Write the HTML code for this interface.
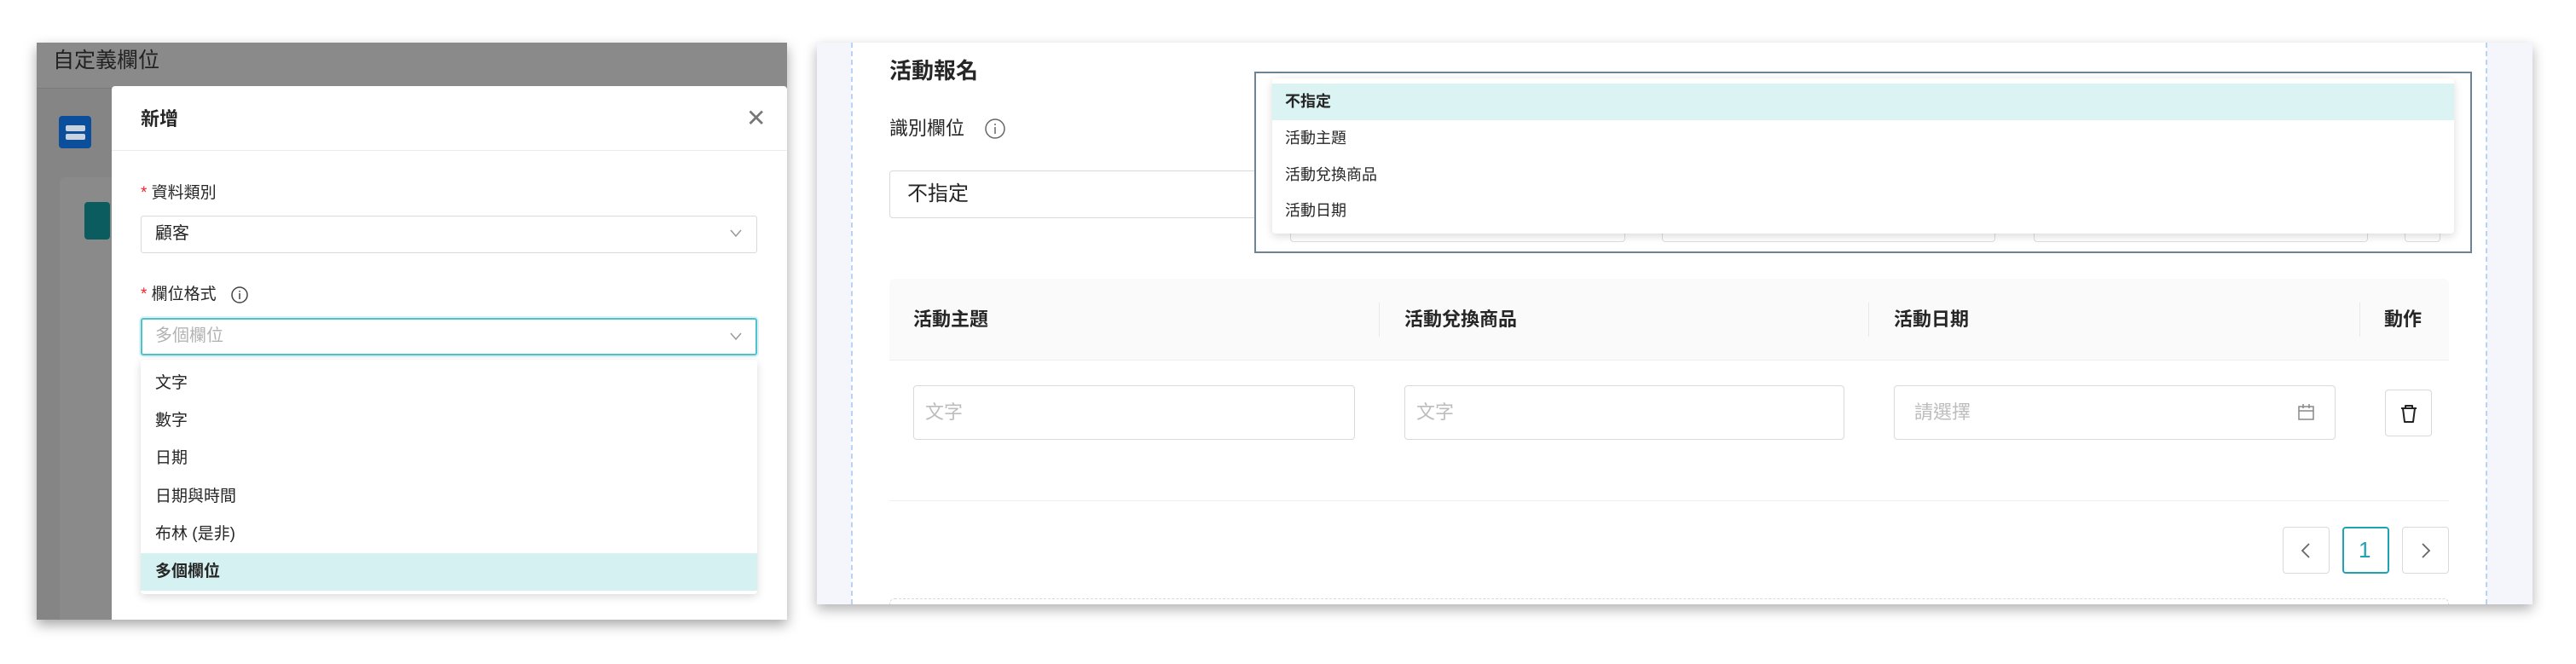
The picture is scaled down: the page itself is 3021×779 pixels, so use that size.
<!DOCTYPE html>
<html><head><meta charset="utf-8"><style>
*{box-sizing:border-box;margin:0;padding:0}
body{width:3021px;height:779px;background:#fff;position:relative;overflow:hidden;font-family:"Liberation Sans","Noto Sans CJK TC",sans-serif;color:#262626}
.a{position:absolute}
.t{position:absolute;white-space:nowrap;line-height:1}
</style></head><body>
<!-- LEFT PANEL -->
<div class="a" style="left:43px;top:50px;width:880px;height:677px;background:#8a8a8a;box-shadow:0 6px 14px rgba(0,0,0,.35);overflow:hidden">
  <div class="a" style="left:0;top:53px;width:880px;height:1px;background:#7a7a7a"></div>
  <div class="t" style="left:19px;top:9px;font-size:25px;color:#222">自定義欄位</div>
  <div class="a" style="left:0;top:54px;width:880px;height:623px;background:#858585"></div>
  <div class="a" style="left:26px;top:86px;width:38px;height:38px;background:#0b4f9c;border-radius:4px"></div>
  <div class="a" style="left:34px;top:97px;width:23px;height:7px;background:#c9d3e0;border-radius:2px"></div>
  <div class="a" style="left:34px;top:107px;width:23px;height:7px;background:#c9d3e0;border-radius:2px"></div>
  <div class="a" style="left:27px;top:158px;width:70px;height:520px;background:#8a8a8a;border-radius:6px 0 0 0"></div>
  <div class="a" style="left:56px;top:187px;width:30px;height:44px;background:#0a5c5f;border-radius:4px"></div>
  <!-- modal -->
  <div class="a" style="left:88px;top:51px;width:792px;height:626px;background:#fff;border-radius:4px 4px 0 0">
    <div class="t" style="left:34px;top:28px;font-size:22px;font-weight:bold">新增</div>
    <div class="t" style="left:744px;top:24px;font-size:28px;color:#777;font-weight:300">✕</div>
    <div class="a" style="left:0;top:75px;width:792px;height:1px;background:#ececec"></div>
    <div class="t" style="left:34px;top:116px;font-size:19px"><span style="color:#f5222d">*</span> 資料類別</div>
    <div class="a" style="left:34px;top:152px;width:723px;height:44px;border:1px solid #d9d9d9;border-radius:3px"></div>
    <div class="t" style="left:51px;top:163px;font-size:20px">顧客</div>
    <svg class="a" style="left:725px;top:168px" width="14" height="10"><path d="M1 1 L7 8 L13 1" fill="none" stroke="#999" stroke-width="1.5"/></svg>
    <div class="t" style="left:34px;top:235px;font-size:19px"><span style="color:#f5222d">*</span> 欄位格式</div>
    <svg class="a" style="left:139px;top:234px" width="22" height="22"><circle cx="11" cy="11" r="9" fill="none" stroke="#444" stroke-width="1.5"/><path d="M11 9v7M11 6v1.5" stroke="#444" stroke-width="1.5"/></svg>
    <div class="a" style="left:34px;top:272px;width:723px;height:44px;border:2px solid #4fc3cc;border-radius:3px;box-shadow:0 0 0 2px rgba(79,195,204,.2)"></div>
    <div class="t" style="left:51px;top:283px;font-size:20px;color:#b3b3b3">多個欄位</div>
    <svg class="a" style="left:725px;top:289px" width="14" height="10"><path d="M1 1 L7 8 L13 1" fill="none" stroke="#999" stroke-width="1.5"/></svg>
    <div class="a" style="left:34px;top:321px;width:723px;height:275px;background:#fff;border-radius:4px;box-shadow:0 3px 10px rgba(0,0,0,.15)">
      <div class="t" style="left:17px;top:18px;font-size:19px">文字</div>
      <div class="t" style="left:17px;top:62px;font-size:19px">數字</div>
      <div class="t" style="left:17px;top:106px;font-size:19px">日期</div>
      <div class="t" style="left:17px;top:151px;font-size:19px">日期與時間</div>
      <div class="t" style="left:17px;top:195px;font-size:19px">布林 (是非)</div>
      <div class="a" style="left:0;top:227px;width:723px;height:44px;background:#d5f1f1"></div>
      <div class="t" style="left:17px;top:239px;font-size:19px;font-weight:bold">多個欄位</div>
    </div>
  </div>
</div>
<!-- RIGHT PANEL -->
<div class="a" style="left:958px;top:50px;width:2012px;height:659px;background:#fff;box-shadow:0 6px 14px rgba(0,0,0,.3);overflow:hidden">
  <div class="a" style="left:0;top:0;width:40px;height:659px;background:#f4f6fb"></div>
  <div class="a" style="left:40px;top:0;width:0;height:659px;border-left:2px dashed #b8d3f5"></div>
  <div class="a" style="left:1958px;top:0;width:54px;height:659px;background:#f4f6fb"></div>
  <div class="a" style="left:1957px;top:0;width:0;height:659px;border-left:2px dashed #b8d3f5"></div>
  <div class="t" style="left:85px;top:20px;font-size:26px;font-weight:bold">活動報名</div>
  <div class="t" style="left:85px;top:90px;font-size:22px">識別欄位</div>
  <svg class="a" style="left:196px;top:88px" width="26" height="26"><circle cx="13" cy="13" r="11" fill="none" stroke="#666" stroke-width="1.5"/><path d="M13 11v8M13 7v2" stroke="#666" stroke-width="1.5"/></svg>
  <div class="a" style="left:85px;top:150px;width:600px;height:56px;border:1px solid #d9d9d9;border-radius:4px"></div>
  <div class="t" style="left:106px;top:166px;font-size:24px">不指定</div>
  <!-- overlay -->
  <div class="a" style="left:513px;top:34px;width:1428px;height:213px;border:2px solid #6c8494;background:#fff"></div>
  <div class="a" style="left:555px;top:200px;width:393px;height:34px;border:1px solid #ddd;border-radius:4px"></div>
  <div class="a" style="left:991px;top:200px;width:391px;height:34px;border:1px solid #ddd;border-radius:4px"></div>
  <div class="a" style="left:1427px;top:200px;width:392px;height:34px;border:1px solid #ddd;border-radius:4px"></div>
  <div class="a" style="left:1862px;top:200px;width:42px;height:34px;border:1px solid #ddd;border-radius:4px"></div>
  <div class="a" style="left:534px;top:42px;width:1386px;height:182px;background:#fff;border-radius:4px;box-shadow:0 3px 10px rgba(0,0,0,.15)">
    <div class="a" style="left:0;top:6px;width:1386px;height:43px;background:#dcf3f3"></div>
    <div class="t" style="left:15px;top:18px;font-size:18px;font-weight:bold">不指定</div>
    <div class="t" style="left:15px;top:61px;font-size:18px">活動主題</div>
    <div class="t" style="left:15px;top:104px;font-size:18px">活動兌換商品</div>
    <div class="t" style="left:15px;top:146px;font-size:18px">活動日期</div>
  </div>
  <!-- table -->
  <div class="a" style="left:85px;top:277px;width:1829px;height:96px;background:#fafafa;border-bottom:1px solid #eee;border-radius:6px 6px 0 0"></div>
  <div class="a" style="left:659px;top:305px;width:1px;height:40px;background:#e8e8e8"></div>
  <div class="a" style="left:1233px;top:305px;width:1px;height:40px;background:#e8e8e8"></div>
  <div class="a" style="left:1809px;top:305px;width:1px;height:40px;background:#e8e8e8"></div>
  <div class="t" style="left:113px;top:314px;font-size:22px;font-weight:bold">活動主題</div>
  <div class="t" style="left:689px;top:314px;font-size:22px;font-weight:bold">活動兌換商品</div>
  <div class="t" style="left:1263px;top:314px;font-size:22px;font-weight:bold">活動日期</div>
  <div class="t" style="left:1838px;top:314px;font-size:22px;font-weight:bold">動作</div>
  <div class="a" style="left:113px;top:402px;width:518px;height:64px;border:1px solid #d9d9d9;border-radius:4px"></div>
  <div class="t" style="left:127px;top:423px;font-size:22px;color:#bdbdbd">文字</div>
  <div class="a" style="left:689px;top:402px;width:516px;height:64px;border:1px solid #d9d9d9;border-radius:4px"></div>
  <div class="t" style="left:703px;top:423px;font-size:22px;color:#bdbdbd">文字</div>
  <div class="a" style="left:1263px;top:402px;width:518px;height:64px;border:1px solid #d9d9d9;border-radius:4px"></div>
  <div class="t" style="left:1287px;top:423px;font-size:22px;color:#bdbdbd">請選擇</div>
  <svg class="a" style="left:1735px;top:422px" width="24" height="24"><rect x="3" y="5" width="17" height="15" fill="none" stroke="#888" stroke-width="1.5"/><path d="M3 10h17M8 2v5M15 2v5" stroke="#888" stroke-width="1.5"/></svg>
  <div class="a" style="left:1839px;top:407px;width:55px;height:55px;border:1px solid #d9d9d9;border-radius:4px;background:#fff"></div>
  <svg class="a" style="left:1852px;top:420px" width="30" height="30"><path d="M6 9h18M11 9V6h8v3M8 9l2 16h10l2-16" fill="none" stroke="#222" stroke-width="2" stroke-linejoin="round"/></svg>
  <div class="a" style="left:85px;top:537px;width:1829px;height:1px;background:#eee"></div>
  <div class="a" style="left:1719px;top:568px;width:55px;height:55px;border:1px solid #d9d9d9;border-radius:4px"></div>
  <svg class="a" style="left:1739px;top:586px" width="14" height="20"><path d="M11 2 L3 10 L11 18" fill="none" stroke="#666" stroke-width="1.8"/></svg>
  <div class="a" style="left:1789px;top:568px;width:55px;height:55px;border:2px solid #1fa3b3;border-radius:4px"></div>
  <div class="t" style="left:1808px;top:582px;font-size:26px;color:#1fa3b3">1</div>
  <div class="a" style="left:1859px;top:568px;width:55px;height:55px;border:1px solid #d9d9d9;border-radius:4px"></div>
  <svg class="a" style="left:1880px;top:586px" width="14" height="20"><path d="M3 2 L11 10 L3 18" fill="none" stroke="#666" stroke-width="1.8"/></svg>
  <div class="a" style="left:85px;top:652px;width:1829px;height:20px;border:1px dashed #d9d9d9;border-radius:6px"></div>
</div>
</body></html>
